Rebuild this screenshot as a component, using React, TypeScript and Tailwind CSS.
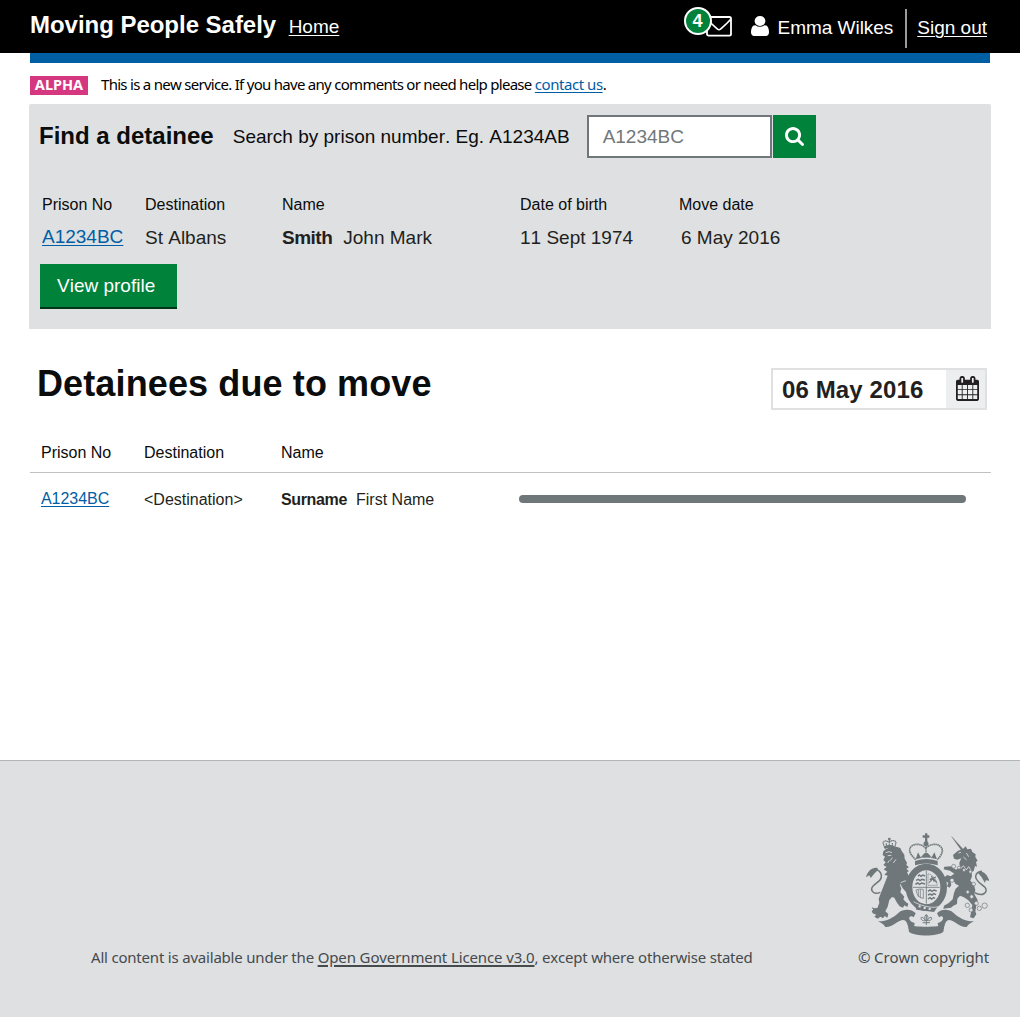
import React from "react";

const SearchIcon = () => (
  <svg className="h-[19px] w-[19px]" viewBox="64 128 1664 1664" fill="#fff">
    <path d="M1216 832q0-185-131.5-316.5t-316.5-131.5-316.5 131.5-131.5 316.5 131.5 316.5 316.5 131.5 316.5-131.5 131.5-316.5zm512 832q0 52-38 90t-90 38q-54 0-90-38l-343-342q-179 124-399 124-143 0-273.5-55.5t-225-150-150-225-55.5-273.5 55.5-273.5 150-225 225-150 273.5-55.5 273.5 55.5 225 150 150 225 55.5 273.5q0 220-124 399l343 343q37 37 37 90z" />
  </svg>
);

const UserIcon = () => (
  <svg className="h-5 w-[18px]" viewBox="256 128 1280 1536" preserveAspectRatio="none" fill="#fff">
    <path d="M1536 1399q0 109-62.5 187t-150.5 78h-854q-88 0-150.5-78t-62.5-187q0-85 8.5-160.5t31.5-152 58.5-131 94-89 134.5-34.5q131 128 313 128t313-128q76 0 134.5 34.5t94 89 58.5 131 31.5 152 8.5 160.5zm-256-887q0 159-112.5 271.5t-271.5 112.5-271.5-112.5-112.5-271.5 112.5-271.5 271.5-112.5 271.5 112.5 112.5 271.5z" />
  </svg>
);

const EnvelopeIcon = () => (
  <svg className="h-[21px] w-[26px]" viewBox="0 0 26 21" fill="none" stroke="#fff">
    <rect x="1" y="1" width="24" height="18.6" rx="1.6" strokeWidth="1.8" />
    <path d="M1.5 3.5C5 7.5 8 10 11.5 13.2c1 .8 2 .8 3 0C18 10 21 7.500 24.500 3.500" strokeWidth="1.6" />
  </svg>
);

const CalendarIcon = () => (
  <svg className="h-[25px] w-[23px]" viewBox="64 0 1664 1792" fill="#231f20">
    <path d="M192 1664h288v-288h-288v288zm352 0h320v-288h-320v288zm-352-352h288v-320h-288v320zm352 0h320v-320h-320v320zm-352-384h288v-288h-288v288zm736 736h320v-288h-320v288zm-384-736h320v-288h-320v288zm768 736h288v-288h-288v288zm-384-352h320v-320h-320v320zm-352-864v-288q0-13-9.5-22.5t-22.5-9.5h-64q-13 0-22.5 9.5t-9.5 22.5v288q0 13 9.5 22.5t22.5 9.5h64q13 0 22.5-9.5t9.5-22.5zm736 864h288v-320h-288v320zm-384-384h320v-288h-320v288zm384 0h288v-288h-288v288zm32-480v-288q0-13-9.5-22.5t-22.5-9.5h-64q-13 0-22.5 9.5t-9.5 22.5v288q0 13 9.5 22.5t22.5 9.5h64q13 0 22.5-9.5t9.5-22.5zm384-64v1280q0 52-38 90t-90 38h-1408q-52 0-90-38t-38-90v-1280q0-52 38-90t90-38h128v-96q0-66 47-113t113-47h64q66 0 113 47t47 113v96h384v-96q0-66 47-113t113-47h64q66 0 113 47t47 113v96h128q52 0 90 38t38 90z" />
  </svg>
);

const Crest = () => (
  <svg className="h-[105px] w-[125px]" viewBox="45 35 375 315" fill="#6f777b">
    {/* ribbon */}
    <path d="M84 303C108 304 130 292 146 277C160 266 184 265 197 279L191 291C184 285 176 288 178 296C180 303 188 307 194 308L192 320L174 317C172 309 170 305 166 301C158 296 147 303 137 309C127 316 116 321 106 320C102 313 94 308 84 303Z" />
    <path d="M372 303C348 304 326 292 310 277C296 266 274 265 261 279L267 291C274 285 281 288 279 296C277 303 269 307 263 308L265 320L283 317C285 309 287 305 291 301C299 296 309 303 319 309C329 316 340 321 350 320C354 313 362 308 372 303Z" />
    <path d="M173 312C192 322 265 322 284 312L280 334C263 349 194 349 177 334Z" />
    {/* garter and shield */}
    <ellipse cx="229" cy="201" rx="52" ry="61" fill="none" stroke="#6f777b" strokeWidth="20" />
    <path d="M194 250L201 245L262 261L252 275L199 268Z" />
    <path d="M191 244C204 252 240 266 266 259" fill="none" stroke="#dee0e2" strokeWidth="2.500" />
    <g fill="#dee0e2"><path d="M207 254l6 2-2 6-6-2zM222 259l6 2-2 6-6-2zM237 262l6 1-2 6-6-1z" /></g>
    <path d="M229 151V250M189 201H269" fill="none" stroke="#6f777b" strokeWidth="2.500" />
    <g fill="none" stroke="#6f777b" strokeWidth="4.500">
      <path d="M204 168l4-4 5 4 5-4 7 3M198 180l7-3 5 4 6-4 9 3M196 192l7-4 6 4 6-4 10 3" />
      <path d="M234 213l6-4 6 4 6-4 8 3M234 224l6-3 6 3 5-4 7 3M234 236l6-4 5 4 6-4 4 2" />
      <path d="M237 187L250 174L260 187M244 167L253 184M239 177L258 170" strokeWidth="3.500" />
      <path d="M198 209Q208 204 220 207V234Q202 233 198 209M205 208V230M211 207V233" strokeWidth="2.200" />
    </g>
    <path d="M234 160Q259 166 262 195H234Z" fill="none" stroke="#6f777b" strokeWidth="1.500" />
    {/* royal crown */}
    <path d="M195 135V122Q229 110 263 122V135Q229 124 195 135Z" />
    <path d="M197 118C183 105 172 90 184 78C199 66 219 74 227 83C237 73 260 66 272 79C283 90 274 106 262 118" fill="none" stroke="#6f777b" strokeWidth="5" strokeDasharray="4.500 1.500" />
    <path d="M228 82V112" stroke="#6f777b" strokeWidth="4" strokeDasharray="4 1" />
    <path d="M197 117L204 96L212 111L224 98H233L245 111L253 96L261 117Q229 106 197 117Z" />
    <g fill="#dee0e2"><circle cx="216" cy="111" r="1.500" /><circle cx="241" cy="111" r="1.500" /></g>
    <circle cx="228" cy="70" r="7.500" />
    <path d="M225 66V52H218V45H225V39H232V45H238V52H232V66Z" />
    {/* lion */}
    <path d="M104 82L99 67Q104 57 117 66Q131 55 138 66L134 83Q118 75 104 82ZM118 58V80M109 69V79M127 68V79" fill="none" stroke="#6f777b" strokeWidth="3.500" strokeDasharray="5 1" />
    <path d="M104 78Q118 70 134 78V86Q118 79 105 86Z" />
    <circle cx="118" cy="56" r="4" />
    <path d="M100 93L107 87L119 81Q135 76 151 83L155 92L163 103L164 115L171 127L169 134L177 141L169 145L177 153L171 155L175 164L181 171L184 187L183 205L187 213L174 211L168 215L157 202L153 193L149 191L154 205L151 216L163 229L160 237L168 246L175 250L172 260L163 255L159 262L149 258L141 247L133 232L126 230L118 239L113 259L106 273L115 281L112 292L104 287L99 294L91 289L83 295L73 289L79 283L68 279L65 271L70 269L65 261L74 264L82 263L88 248L86 235L94 214L102 194L113 166L103 163L112 154L101 147L110 140L100 134L107 126L100 119L105 109L98 104Z" />
    <path d="M107 97L117 94L126 97M113 106L124 105M121 121L127 112M130 128L138 117M113 128L118 120M152 187L168 181" fill="none" stroke="#dee0e2" strokeWidth="2.500" />
    <path d="M91 216C68 226 59 207 70 196C83 183 96 181 94 164C92 152 82 147 72 145" fill="none" stroke="#6f777b" strokeWidth="4.500" />
    <path d="M83 143C68 140 53 151 48 171L58 165L62 173L74 159L81 152Z" />
    {/* unicorn */}
    <path d="M303 47L307 50L342 89L337 95Z" />
    <path d="M309 104L324 91L338 87L347 78L352 87L363 85L367 95L377 102L376 110L383 121L378 125L381 139L375 137L371 152L365 155L366 168L361 181L372 194L376 209L373 221L383 239L379 255L376 273L379 282L371 294L360 291L364 273L367 254L355 240L342 231L330 226L322 235L321 251L310 256L303 262L280 265L282 256L296 248L308 237L312 218L317 205L327 196L316 190L310 179L300 178L304 194L299 202L291 198L295 188L286 181L284 170L292 164L302 168L313 160L300 151L281 147L283 139L303 138L318 148L329 139L328 127L334 114L322 118L312 115Z" />
    <path d="M325 98L333 96M340 110L350 119M349 98L356 109" fill="none" stroke="#dee0e2" strokeWidth="2.500" />
    <path d="M324 131L333 144L340 136L349 149L356 139L364 152" fill="none" stroke="#dee0e2" strokeWidth="2.500" />
    <g fill="#dee0e2" stroke="#6f777b" strokeWidth="2">
      <circle cx="311" cy="138" r="6" /><circle cx="327" cy="142" r="4.500" /><circle cx="342" cy="149" r="4.500" /><circle cx="361" cy="154" r="4.500" />
      <circle cx="306" cy="180" r="6" /><circle cx="371" cy="191" r="5.500" /><circle cx="353" cy="215" r="5" /><circle cx="365" cy="229" r="5.500" />
      <circle cx="352" cy="255" r="6.500" /><circle cx="363" cy="269" r="6" /><circle cx="388" cy="264" r="6.500" /><circle cx="404" cy="256" r="8" /><circle cx="379" cy="249" r="6" />
    </g>
    <path d="M374 217C398 231 416 215 405 201C394 190 376 182 377 168C378 158 386 154 396 153" fill="none" stroke="#6f777b" strokeWidth="4.500" />
    <path d="M383 157C394 147 411 159 418 181L407 180L405 188L394 169Z" />
    {/* floral badge beneath the shield */}
    <path d="M229 314V284M229 282C222 289 223 297 229 302C235 297 236 289 229 282M226 301C217 302 211 298 214 291C220 290 223 296 226 301M232 301C241 302 247 298 244 291C238 290 235 296 232 301M218 307H240" fill="none" stroke="#6f777b" strokeWidth="2.800" />
  </svg>
);

const Columns = ({ className, children }: { className: string; children: React.ReactNode }) => (
  <div className={`grid grid-cols-[103px_137px_238px_159px_1fr] ${className}`}>{children}</div>
);

export default function App() {
  return (
    <div className="flex h-[1017px] w-[1020px] flex-col overflow-hidden bg-white font-['Liberation_Sans',Arial,sans-serif] text-[#0b0c0c] [font-kerning:none]">
      <header className="flex h-[53px] shrink-0 items-start bg-black pl-[30px] pr-[33px] text-[19px] text-white">
        <h1 className="mt-2.5 whitespace-nowrap text-2xl leading-[30px] font-bold tracking-[-0.030px]">Moving People Safely</h1>
        <a className="mt-[13px] ml-[12.500px] leading-[27px] underline decoration-1 underline-offset-2">Home</a>
        <div className="ml-auto flex">
          <div className="relative mt-4 mr-[19px]">
            <EnvelopeIcon />
            <span className="absolute -top-[9px] -left-[22px] flex h-7 w-7 items-center justify-center rounded-full border-2 border-white bg-[#00823b] text-lg leading-none font-bold">4</span>
          </div>
          <div className="mt-4"><UserIcon /></div>
          <span className="mt-3.5 ml-[9px] leading-[27px] tracking-[-0.040px]">Emma Wilkes</span>
          <span className="mt-[9px] ml-3 h-[39px] w-0.5 bg-[#9a9a9a]" />
          <a className="mt-3.5 ml-2.5 leading-[27px] underline decoration-1 underline-offset-2">Sign out</a>
        </div>
      </header>
      <div className="mx-[30px] h-2.5 shrink-0 bg-[#005ea5]" />

      <div className="flex h-[41px] shrink-0 items-start pt-[13px] pl-[30px] font-['Noto_Sans',sans-serif]">
        <strong className="flex h-[19px] w-[58px] items-center justify-center bg-[#d53880] pb-0.5 text-[14.500px] leading-none font-bold text-white">ALPHA</strong>
        <p className="ml-[13px] -mt-px text-[15px] leading-[18px] tracking-[-0.715px] whitespace-nowrap text-black">
          This is a new service. If you have any comments or need help please{" "}
          <a className="tracking-[-0.450px] text-[#005ea5] underline decoration-1 underline-offset-2">contact us</a>.
        </p>
      </div>

      <section className="mx-[29px] h-[225px] shrink-0 rounded-t-xs bg-[#dee0e2]">
        <div className="flex items-start pt-[11px] pl-2.5">
          <h2 className="mt-[5px] text-2xl leading-8 font-bold">Find a detainee</h2>
          <label className="mt-[7px] ml-[19px] text-[19px] leading-[29px] whitespace-nowrap">Search by prison number. Eg. A1234AB</label>
          <div className="ml-[17px] h-[43px] w-[185px] border-2 border-[#6f777b] bg-white pt-[5px] pl-3.5 text-[19px] leading-[29px] text-[#6f777b]">A1234BC</div>
          <button className="ml-px flex h-[43px] w-[43px] items-center justify-center bg-[#00823b]"><SearchIcon /></button>
        </div>
        <Columns className="mt-[37px] pl-[13px] text-base leading-5">
          <span>Prison No</span><span>Destination</span><span>Name</span><span>Date of birth</span><span>Move date</span>
        </Columns>
        <Columns className="mt-[11px] pl-[13px] text-[19px] leading-6 text-[#231f20]">
          <a className="-mt-px text-[#005ea5] underline decoration-1 underline-offset-2">A1234BC</a>
          <span>St Albans</span>
          <span><b className="tracking-[-0.500px]">Smith</b><span className="ml-[11px]">John Mark</span></span>
          <span>11 Sept 1974</span>
          <span className="ml-0.5">6 May 2016</span>
        </Columns>
        <button className="mt-3.5 ml-[11px] block h-[45px] w-[137px] border-b-2 border-[#003618] bg-[#00823b] text-left text-[19px] leading-[43px] text-white"><span className="pl-[17px]">View profile</span></button>
      </section>

      <main className="flex-1">
        <div className="flex items-start justify-between pt-[34px] pr-[33px] pl-[37px]">
          <h2 className="text-4xl leading-[42px] font-bold tracking-[0.120px]">Detainees due to move</h2>
          <div className="mt-[5px] flex h-[42px] w-[216px] border-2 border-[#dee0e2] bg-white">
            <span className="flex-1 pl-[9px] text-2xl leading-[39px] font-bold tracking-[0.120px] text-[#231f20]">06 May 2016</span>
            <span className="flex w-[39px] items-start justify-center bg-[#eceef0] pt-1.5 pl-[3px]"><CalendarIcon /></span>
          </div>
        </div>
        <div className="mr-[29px] ml-[30px]">
          <Columns className="h-[63px] border-b border-[#bfc1c3] pt-[33px] pl-[11px] text-base leading-5">
            <span>Prison No</span><span>Destination</span><span>Name</span>
          </Columns>
          <Columns className="pt-4 pl-[11px] text-base leading-[22px] text-[#231f20]">
            <a className="-mt-px tracking-[-0.050px] text-[#005ea5] underline decoration-1 underline-offset-2">A1234BC</a>
            <span>&lt;Destination&gt;</span>
            <span><b className="tracking-[-0.350px]">Surname</b><span className="ml-[9px]">First Name</span></span>
            <span className="mt-1.5 h-2 w-[447px] rounded-full bg-[#6f777b]" />
          </Columns>
        </div>
      </main>

      <footer className="h-[257px] shrink-0 border-t border-[#b1b6b8] bg-[#dee0e2] pt-[71px] pr-[31px] pl-[91px] font-['Noto_Sans',sans-serif] text-[15px] leading-[22px] tracking-[-0.200px] text-[#454a4d]">
        <div className="mr-[-1px] flex justify-end"><Crest /></div>
        <div className="mt-[9px] flex justify-between whitespace-nowrap">
          <p>
            All content is available under the{" "}
            <a className="tracking-[-0.120px] underline decoration-2 underline-offset-2">Open Government Licence v3.0</a>
            , except where otherwise stated
          </p>
          <p className="tracking-[-0.130px]">© Crown copyright</p>
        </div>
      </footer>
    </div>
  );
}
